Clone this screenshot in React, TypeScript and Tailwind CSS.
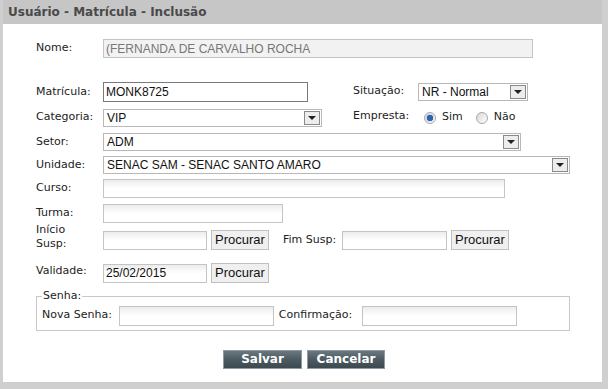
import React from "react";

const label = "font-['DejaVu_Sans',Verdana,sans-serif] text-[11px] text-[#222]";
const field = "font-['Liberation_Sans',Arial,sans-serif] text-[12px] text-[#111]";

const Input: React.FC<{ w: string; h?: string; value?: string; disabled?: boolean }> = ({ w, h, value, disabled }) => (
  <div
    className={`${w} ${h ?? "h-[19px]"} flex items-center px-[2px] border ${field} border-[#c4c4c4] ${
      disabled ? "bg-[#f2f2f2] text-[#777]" : "bg-gradient-to-b from-[#ececec] via-white to-white"
    }`}
  >
    {value}
  </div>
);

const Select: React.FC<{ w: string; value: string }> = ({ w, value }) => (
  <div className={`${w} h-[18px] flex items-center justify-between border border-[#b8b8b8] bg-white pl-[3px] pr-[1px] ${field}`}>
    <span>{value}</span>
    <span className="w-[16px] h-[14px] border border-[#8a8a8a] bg-[#ededed] flex items-center justify-center">
      <svg width="8" height="4" viewBox="0 0 8 4">
        <path d="M0 0h8L4 4z" fill="#222" />
      </svg>
    </span>
  </div>
);

const Btn: React.FC<{ text: string }> = ({ text }) => (
  <div className={`w-[58px] h-[20px] flex items-center justify-center border border-[#c0c0c0] bg-[#efefef] ${field} text-[13px]`}>
    {text}
  </div>
);

const Radio: React.FC<{ on?: boolean }> = ({ on }) => (
  <span className="w-[12px] h-[12px] rounded-full border border-[#a8a8a8] bg-gradient-to-br from-[#d8d8d8] to-white flex items-center justify-center">
    {on && <span className="w-[6px] h-[6px] rounded-full bg-[#2a63b8] shadow-[0_0_1px_#1d3f7a]" />}
  </span>
);

const Row: React.FC<{ name: string; className?: string; children: React.ReactNode }> = ({ name, className, children }) => (
  <div className={`flex items-center ${className ?? ""}`}>
    <div className={`w-[67px] ${label}`}>{name}</div>
    {children}
  </div>
);

export default function App() {
  return (
    <div className="w-[608px] h-[389px] bg-white">
      <div className="w-[608px] h-[389px] flex flex-col border-l-[3px] border-r-[6px] border-b-[7px] border-[#cfcfcf]">
        <div className="h-[24px] bg-[#c6c6c6] flex items-center pl-[5px] font-['DejaVu_Sans',Verdana,sans-serif] font-bold text-[12px] text-[#4a4a4a]">
          Usuário - Matrícula - Inclusão
        </div>
        <div className="flex-1 flex flex-col pl-[33px]">
          <Row name="Nome:" className="mt-[15px]">
            <Input w="w-[430px]" value="(FERNANDA DE CARVALHO ROCHA" disabled />
          </Row>

          <div className="flex items-center mt-[24px] h-[20px]">
            <div className={`w-[67px] ${label}`}>Matrícula:</div>
            <div className={`w-[205px] h-[20px] border border-[#7a7a7a] flex items-center px-[2px] ${field}`}>MONK8725</div>
            <div className={`ml-[45px] w-[65px] ${label} -mt-[2px]`}>Situação:</div>
            <Select w="w-[110px]" value="NR - Normal" />
          </div>

          <div className="flex items-center mt-[6px] h-[19px]">
            <div className={`w-[67px] ${label}`}>Categoria:</div>
            <Select w="w-[219px]" value="VIP" />
            <div className={`ml-[31px] w-[71px] ${label} -mt-[3px]`}>Empresta:</div>
            <div className={`flex items-center gap-[6px] ${label} text-[11.5px]`}>
              <Radio on />
              <span className="mr-[7px]">Sim</span>
              <Radio />
              <span>Não</span>
            </div>
          </div>

          <Row name="Setor:" className="mt-[6px]">
            <Select w="w-[418px]" value="ADM" />
          </Row>

          <Row name="Unidade:" className="mt-[5px]">
            <Select w="w-[467px]" value="SENAC SAM - SENAC SANTO AMARO" />
          </Row>

          <Row name="Curso:" className="mt-[5px]">
            <Input w="w-[402px]" />
          </Row>

          <Row name="Turma:" className="mt-[6px]">
            <Input w="w-[180px]" />
          </Row>

          <div className="flex items-center mt-[6px]">
            <div className={`w-[67px] ${label} leading-[14px] -mt-[6px]`}>
              Início
              <br />
              Susp:
            </div>
            <Input w="w-[104px]" />
            <div className="ml-[4px]">
              <Btn text="Procurar" />
            </div>
            <div className={`ml-[14px] w-[59px] ${label}`}>Fim Susp:</div>
            <Input w="w-[105px]" />
            <div className="ml-[4px]">
              <Btn text="Procurar" />
            </div>
          </div>

          <div className="flex items-center mt-[12px]">
            <div className={`w-[67px] ${label} -mt-[4px]`}>Validade:</div>
            <Input w="w-[104px]" value="25/02/2015" />
            <div className="ml-[4px]">
              <Btn text="Procurar" />
            </div>
          </div>

          <fieldset className="mt-[5px] w-[534px] border border-[#c8c8c8] pl-[5px] pb-[4px] pt-0">
            <legend className={`${label} px-[1px]`}>Senha:</legend>
            <div className="flex items-center mt-[1px]">
              <span className={`${label} mr-[7px]`}>Nova Senha:</span>
              <Input w="w-[155px]" h="h-[20px]" />
              <span className={`${label} ml-[5px] mr-[10px]`}>Confirmação:</span>
              <Input w="w-[155px]" h="h-[20px]" />
            </div>
          </fieldset>

          <div className="flex mt-[19px] pl-[187px] gap-[5px]">
            {["Salvar", "Cancelar"].map((t) => (
              <div
                key={t}
                className={`${t === "Salvar" ? "w-[79px]" : "w-[78px]"} h-[19px] flex items-center justify-center border border-[#8e9aa1] bg-gradient-to-b from-[#6b7880] via-[#4c5a62] to-[#3c4950] text-white font-['DejaVu_Sans',Verdana,sans-serif] font-bold text-[12px]`}
              >
                {t}
              </div>
            ))}
          </div>
        </div>
      </div>
    </div>
  );
}
